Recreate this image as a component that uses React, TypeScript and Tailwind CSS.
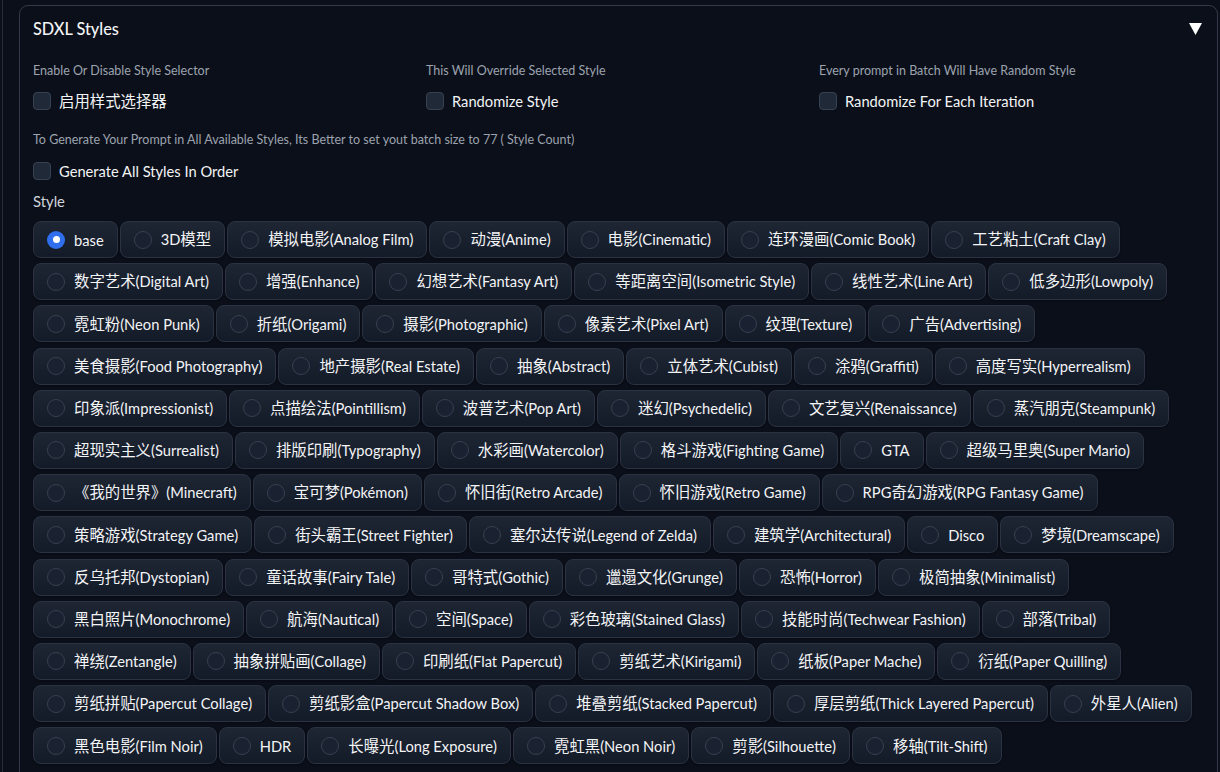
import React from "react";

const ROWS: string[][] = [
  ["base", "3D模型", "模拟电影(Analog Film)", "动漫(Anime)", "电影(Cinematic)", "连环漫画(Comic Book)", "工艺粘土(Craft Clay)"],
  ["数字艺术(Digital Art)", "增强(Enhance)", "幻想艺术(Fantasy Art)", "等距离空间(Isometric Style)", "线性艺术(Line Art)", "低多边形(Lowpoly)"],
  ["霓虹粉(Neon Punk)", "折纸(Origami)", "摄影(Photographic)", "像素艺术(Pixel Art)", "纹理(Texture)", "广告(Advertising)"],
  ["美食摄影(Food Photography)", "地产摄影(Real Estate)", "抽象(Abstract)", "立体艺术(Cubist)", "涂鸦(Graffiti)", "高度写实(Hyperrealism)"],
  ["印象派(Impressionist)", "点描绘法(Pointillism)", "波普艺术(Pop Art)", "迷幻(Psychedelic)", "文艺复兴(Renaissance)", "蒸汽朋克(Steampunk)"],
  ["超现实主义(Surrealist)", "排版印刷(Typography)", "水彩画(Watercolor)", "格斗游戏(Fighting Game)", "GTA", "超级马里奥(Super Mario)"],
  ["《我的世界》(Minecraft)", "宝可梦(Pokémon)", "怀旧街(Retro Arcade)", "怀旧游戏(Retro Game)", "RPG奇幻游戏(RPG Fantasy Game)"],
  ["策略游戏(Strategy Game)", "街头霸王(Street Fighter)", "塞尔达传说(Legend of Zelda)", "建筑学(Architectural)", "Disco", "梦境(Dreamscape)"],
  ["反乌托邦(Dystopian)", "童话故事(Fairy Tale)", "哥特式(Gothic)", "邋遢文化(Grunge)", "恐怖(Horror)", "极简抽象(Minimalist)"],
  ["黑白照片(Monochrome)", "航海(Nautical)", "空间(Space)", "彩色玻璃(Stained Glass)", "技能时尚(Techwear Fashion)", "部落(Tribal)"],
  ["禅绕(Zentangle)", "抽象拼贴画(Collage)", "印刷纸(Flat Papercut)", "剪纸艺术(Kirigami)", "纸板(Paper Mache)", "衍纸(Paper Quilling)"],
  ["剪纸拼贴(Papercut Collage)", "剪纸影盒(Papercut Shadow Box)", "堆叠剪纸(Stacked Papercut)", "厚层剪纸(Thick Layered Papercut)", "外星人(Alien)"],
  ["黑色电影(Film Noir)", "HDR", "长曝光(Long Exposure)", "霓虹黑(Neon Noir)", "剪影(Silhouette)", "移轴(Tilt-Shift)"],
];

const FONT = { fontFamily: '"Lato", "Noto Sans CJK SC", sans-serif' };

// Han characters and CJK punctuation are set a little larger than the Latin runs.
const CJK_RUN = /([\u3000-\u303f\u4e00-\u9fff\uff00-\uffef]+)/;

function Mixed({ text }: { text: string }) {
  const parts = text.split(CJK_RUN).filter((p) => p.length > 0);
  return (
    <>
      {parts.map((p, i) =>
        CJK_RUN.test(p) ? (
          <span key={i} className="text-[15.4px]">
            {p}
          </span>
        ) : (
          <span key={i} className="text-[14.7px]">
            {p}
          </span>
        )
      )}
    </>
  );
}

function Checkbox({ label }: { label: string }) {
  return (
    <label className="flex h-[22px] items-center gap-[8px]">
      <span className="h-[18px] w-[18px] rounded-[4px] border border-[#374151] bg-[#1f2937]" />
      <span className="leading-none text-[#f3f4f6]">
        <Mixed text={label} />
      </span>
    </label>
  );
}

function Chip({ label, selected }: { label: string; selected?: boolean }) {
  return (
    <div className="flex h-[37px] shrink-0 items-center gap-[9px] rounded-[8px] border border-[#2b3342] bg-gradient-to-t from-[#131a28] to-[#1e2533] pl-[13px] pr-[13px] shadow-[0_1px_2px_rgba(0,0,0,0.3)]">
      {selected ? (
        <span className="flex h-[18px] w-[18px] items-center justify-center rounded-full bg-[#2f6fed]">
          <span className="h-[7px] w-[7px] rounded-full bg-white" />
        </span>
      ) : (
        <span className="h-[18px] w-[18px] rounded-full border border-[#374151] bg-[#1a2130]" />
      )}
      <span className="whitespace-nowrap leading-none text-[#f3f4f6]">
        <Mixed text={label} />
      </span>
    </div>
  );
}

const SMALL = "h-[18px] text-[12.5px] leading-[18px] text-[#9ca3af]";

export default function App() {
  return (
    <div className="h-[772px] overflow-hidden bg-[#0b0f19]" style={FONT}>
      <div className="ml-[2px] h-full border-l border-[#272d3a] pl-[16px] pt-[5px]">
        <div className="h-[900px] w-[1199px] rounded-[9px] border border-[#323a49] px-[13px] pt-[11px]">
          <div className="flex h-[24px] items-center justify-between">
            <span className="text-[16.3px] font-medium text-[#f3f4f6]">SDXL Styles</span>
            <svg width="13" height="12" viewBox="0 0 13 12" className="mr-[2px]">
              <polygon points="0,0 13,0 6.5,12" fill="#ffffff" />
            </svg>
          </div>

          <div className="mt-[21px] grid grid-cols-3 gap-x-[8px]">
            <div>
              <div className={SMALL}>Enable Or Disable Style Selector</div>
              <div className="mt-[10px]">
                <Checkbox label="启用样式选择器" />
              </div>
            </div>
            <div>
              <div className={SMALL}>This Will Override Selected Style</div>
              <div className="mt-[10px]">
                <Checkbox label="Randomize Style" />
              </div>
            </div>
            <div>
              <div className={SMALL}>Every prompt in Batch Will Have Random Style</div>
              <div className="mt-[10px]">
                <Checkbox label="Randomize For Each Iteration" />
              </div>
            </div>
          </div>

          <div className={`mt-[19px] ${SMALL}`}>
            To Generate Your Prompt in All Available Styles, Its Better to set yout batch size to 77 ( Style Count)
          </div>
          <div className="mt-[11px]">
            <Checkbox label="Generate All Styles In Order" />
          </div>

          <div className="mt-[9px] h-[20px] text-[14.8px] leading-[20px] text-[#d1d5db]">Style</div>

          <div className="mt-[10px] flex flex-col gap-y-[5.2px]">
            {ROWS.map((row, i) => (
              <div key={i} className="flex gap-x-[2px]">
                {row.map((label, j) => (
                  <Chip key={label} label={label} selected={i === 0 && j === 0} />
                ))}
              </div>
            ))}
          </div>
        </div>
      </div>
    </div>
  );
}
